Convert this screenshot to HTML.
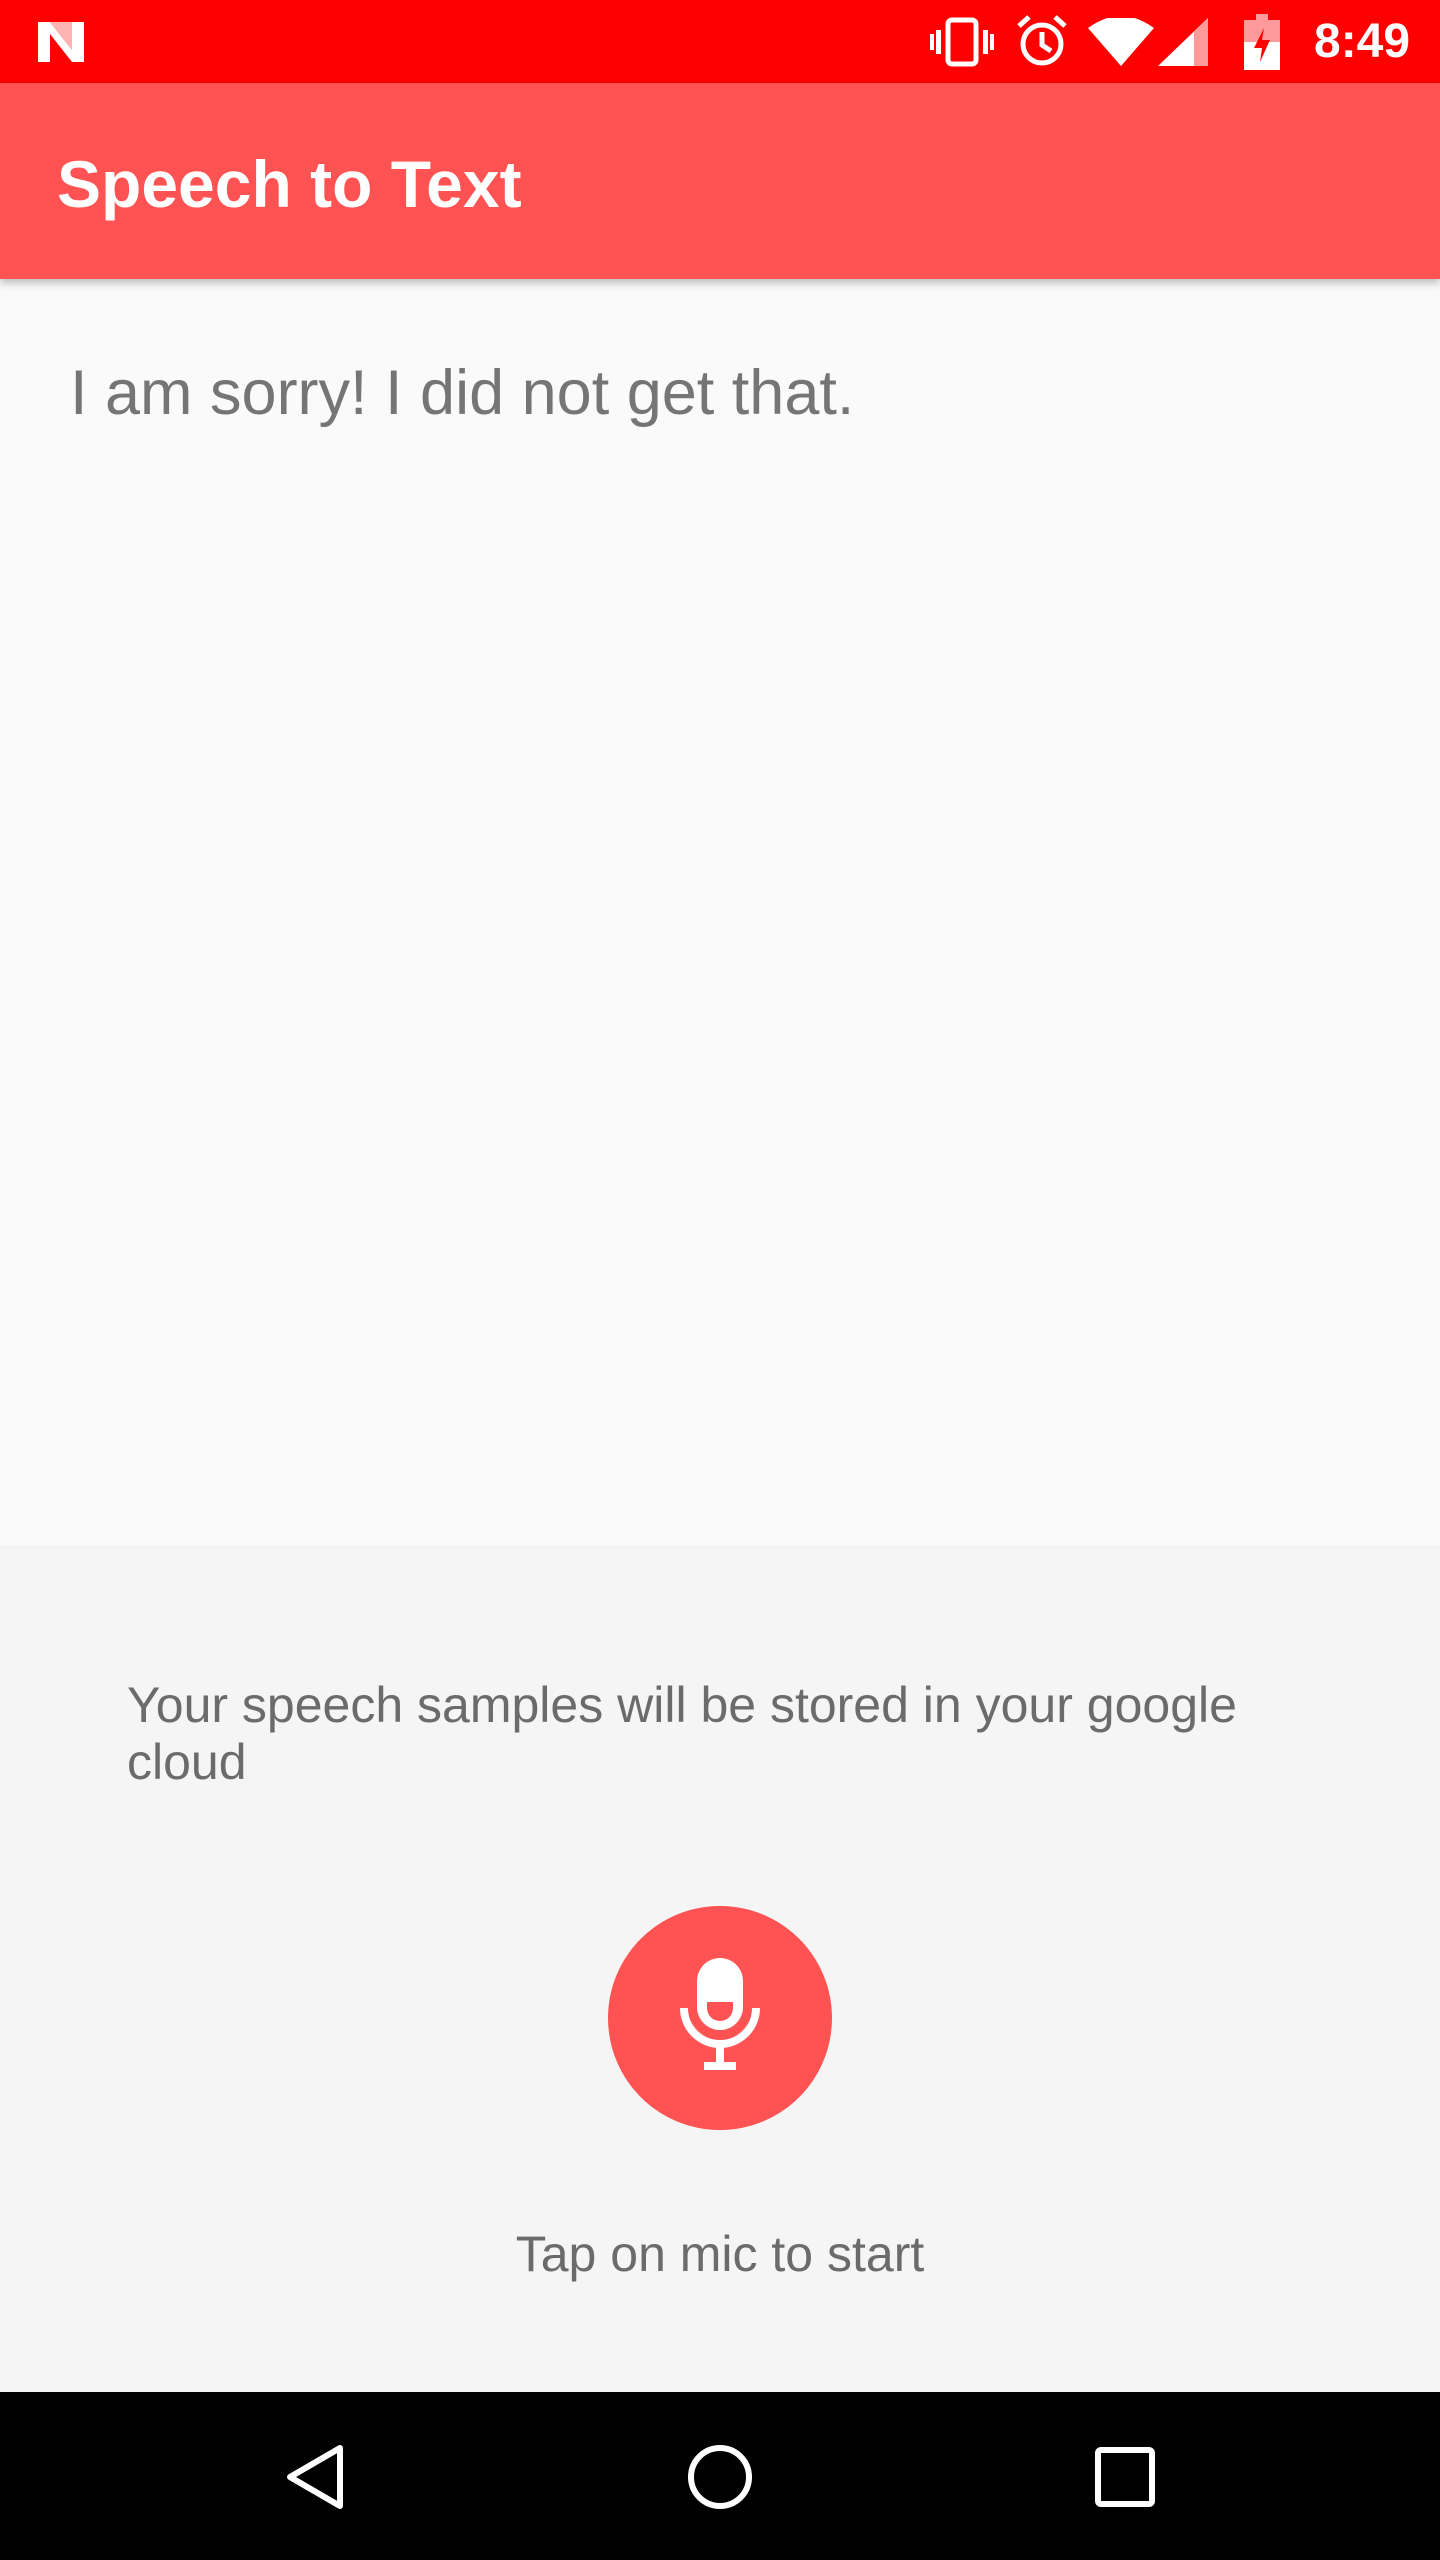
<!DOCTYPE html>
<html><head><meta charset="utf-8"><style>
html,body{margin:0;padding:0;width:1440px;height:2560px;overflow:hidden;font-family:"Liberation Sans",sans-serif;}
#sb{position:absolute;left:0;top:0;width:1440px;height:83px;background:#ff0000;}
#ab{position:absolute;left:0;top:83px;width:1440px;height:196px;background:#ff5252;box-shadow:0 4px 8px rgba(0,0,0,0.25);z-index:2;}
#ab span{position:absolute;left:57px;top:68px;font-size:66px;color:#fff;font-weight:bold;line-height:1;}
#top{position:absolute;left:0;top:279px;width:1440px;height:1266px;background:#fafafa;}
#msg{position:absolute;left:70px;top:362px;font-size:63px;color:#757575;line-height:1;}
#bot{position:absolute;left:0;top:1545px;width:1440px;height:847px;background:#f5f5f5;}
#note{position:absolute;left:127px;top:1677px;width:1160px;font-size:50px;color:#6b6b6b;line-height:57px;}
#mic{position:absolute;left:608px;top:1906px;width:224px;height:224px;border-radius:50%;background:#ff5252;}
#tap{position:absolute;left:0;width:1440px;top:2229px;text-align:center;font-size:50px;color:#6b6b6b;line-height:1;}
#nav{position:absolute;left:0;top:2392px;width:1440px;height:168px;background:#000;}
#time{position:absolute;left:1314px;top:18px;font-size:48px;color:#fff;font-weight:bold;line-height:1;}
</style></head><body>
<div id="sb">
<svg style="position:absolute;left:36px;top:20px" width="50" height="44" viewBox="0 0 50 44"><path d="M2 2h12l22 28V2h12v40H36L14 14v28H2z" fill="#fff"/><path d="M2 2h12l22 28V2" fill="#ffb3b3"/></svg>
<svg style="position:absolute;left:930px;top:16px" width="64" height="52" viewBox="0 0 64 52"><rect x="18" y="4" width="28" height="44" rx="4" fill="none" stroke="#fff" stroke-width="5"/><rect x="6" y="14" width="5" height="24" fill="#fff"/><rect x="53" y="14" width="5" height="24" fill="#fff"/><rect x="0" y="18" width="4" height="16" fill="#fff"/><rect x="60" y="18" width="4" height="16" fill="#fff"/></svg>
<svg style="position:absolute;left:1015px;top:14px" width="54" height="54" viewBox="0 0 54 54"><circle cx="27" cy="30" r="19" fill="none" stroke="#fff" stroke-width="5"/><path d="M27 18v13l9 6" fill="none" stroke="#fff" stroke-width="5"/><path d="M4 12l10-9M50 12L40 3" stroke="#fff" stroke-width="5"/></svg>
<svg style="position:absolute;left:1088px;top:18px" width="66" height="48" viewBox="0 0 66 48"><path d="M0 10Q33-14 66 10L33 48z" fill="#fff"/></svg>
<svg style="position:absolute;left:1158px;top:18px" width="50" height="48" viewBox="0 0 50 48"><path d="M50 0V48H0z" fill="#fff"/><path d="M50 0V48H36V14z" fill="#ff9a9a"/></svg>
<svg style="position:absolute;left:1244px;top:14px" width="36" height="56" viewBox="0 0 36 56"><rect x="12" y="0" width="12" height="6" fill="#ff9a9a"/><rect x="0" y="6" width="36" height="50" fill="#fff"/><rect x="0" y="6" width="36" height="22" fill="#ff9a9a"/><path d="M20 14L10 34h8l-2 14 10-22h-8z" fill="#ff0000"/></svg>
<div id="time">8:49</div>
</div>
<div id="ab"><span>Speech to Text</span></div>
<div id="top"></div>
<div id="msg">I am sorry! I did not get that.</div>
<div id="bot"></div>
<div id="note">Your speech samples will be stored in your google cloud</div>
<div id="mic"><svg style="position:absolute;left:62px;top:52px" width="100" height="120" viewBox="0 0 100 120"><rect x="27" y="0" width="46" height="72" rx="23" fill="#fff"/><path d="M37 44h26v6a13 13 0 0 1-26 0z" fill="#ff5252"/><path d="M14 50a36 36 0 0 0 72 0" fill="none" stroke="#fff" stroke-width="8"/><rect x="46" y="86" width="8" height="22" fill="#fff"/><rect x="34" y="104" width="32" height="8" fill="#fff"/></svg></div>
<div id="tap">Tap on mic to start</div>
<div id="nav">
<svg style="position:absolute;left:282px;top:50px" width="70" height="70" viewBox="0 0 70 70"><path d="M58 6V64L8 35z" fill="none" stroke="#fff" stroke-width="6" stroke-linejoin="round"/></svg>
<svg style="position:absolute;left:685px;top:50px" width="70" height="70" viewBox="0 0 70 70"><circle cx="35" cy="35" r="29" fill="none" stroke="#fff" stroke-width="6"/></svg>
<svg style="position:absolute;left:1094px;top:54px" width="62" height="62" viewBox="0 0 62 62"><rect x="4" y="4" width="54" height="54" rx="3" fill="none" stroke="#fff" stroke-width="6"/></svg>
</div>
</body></html>
